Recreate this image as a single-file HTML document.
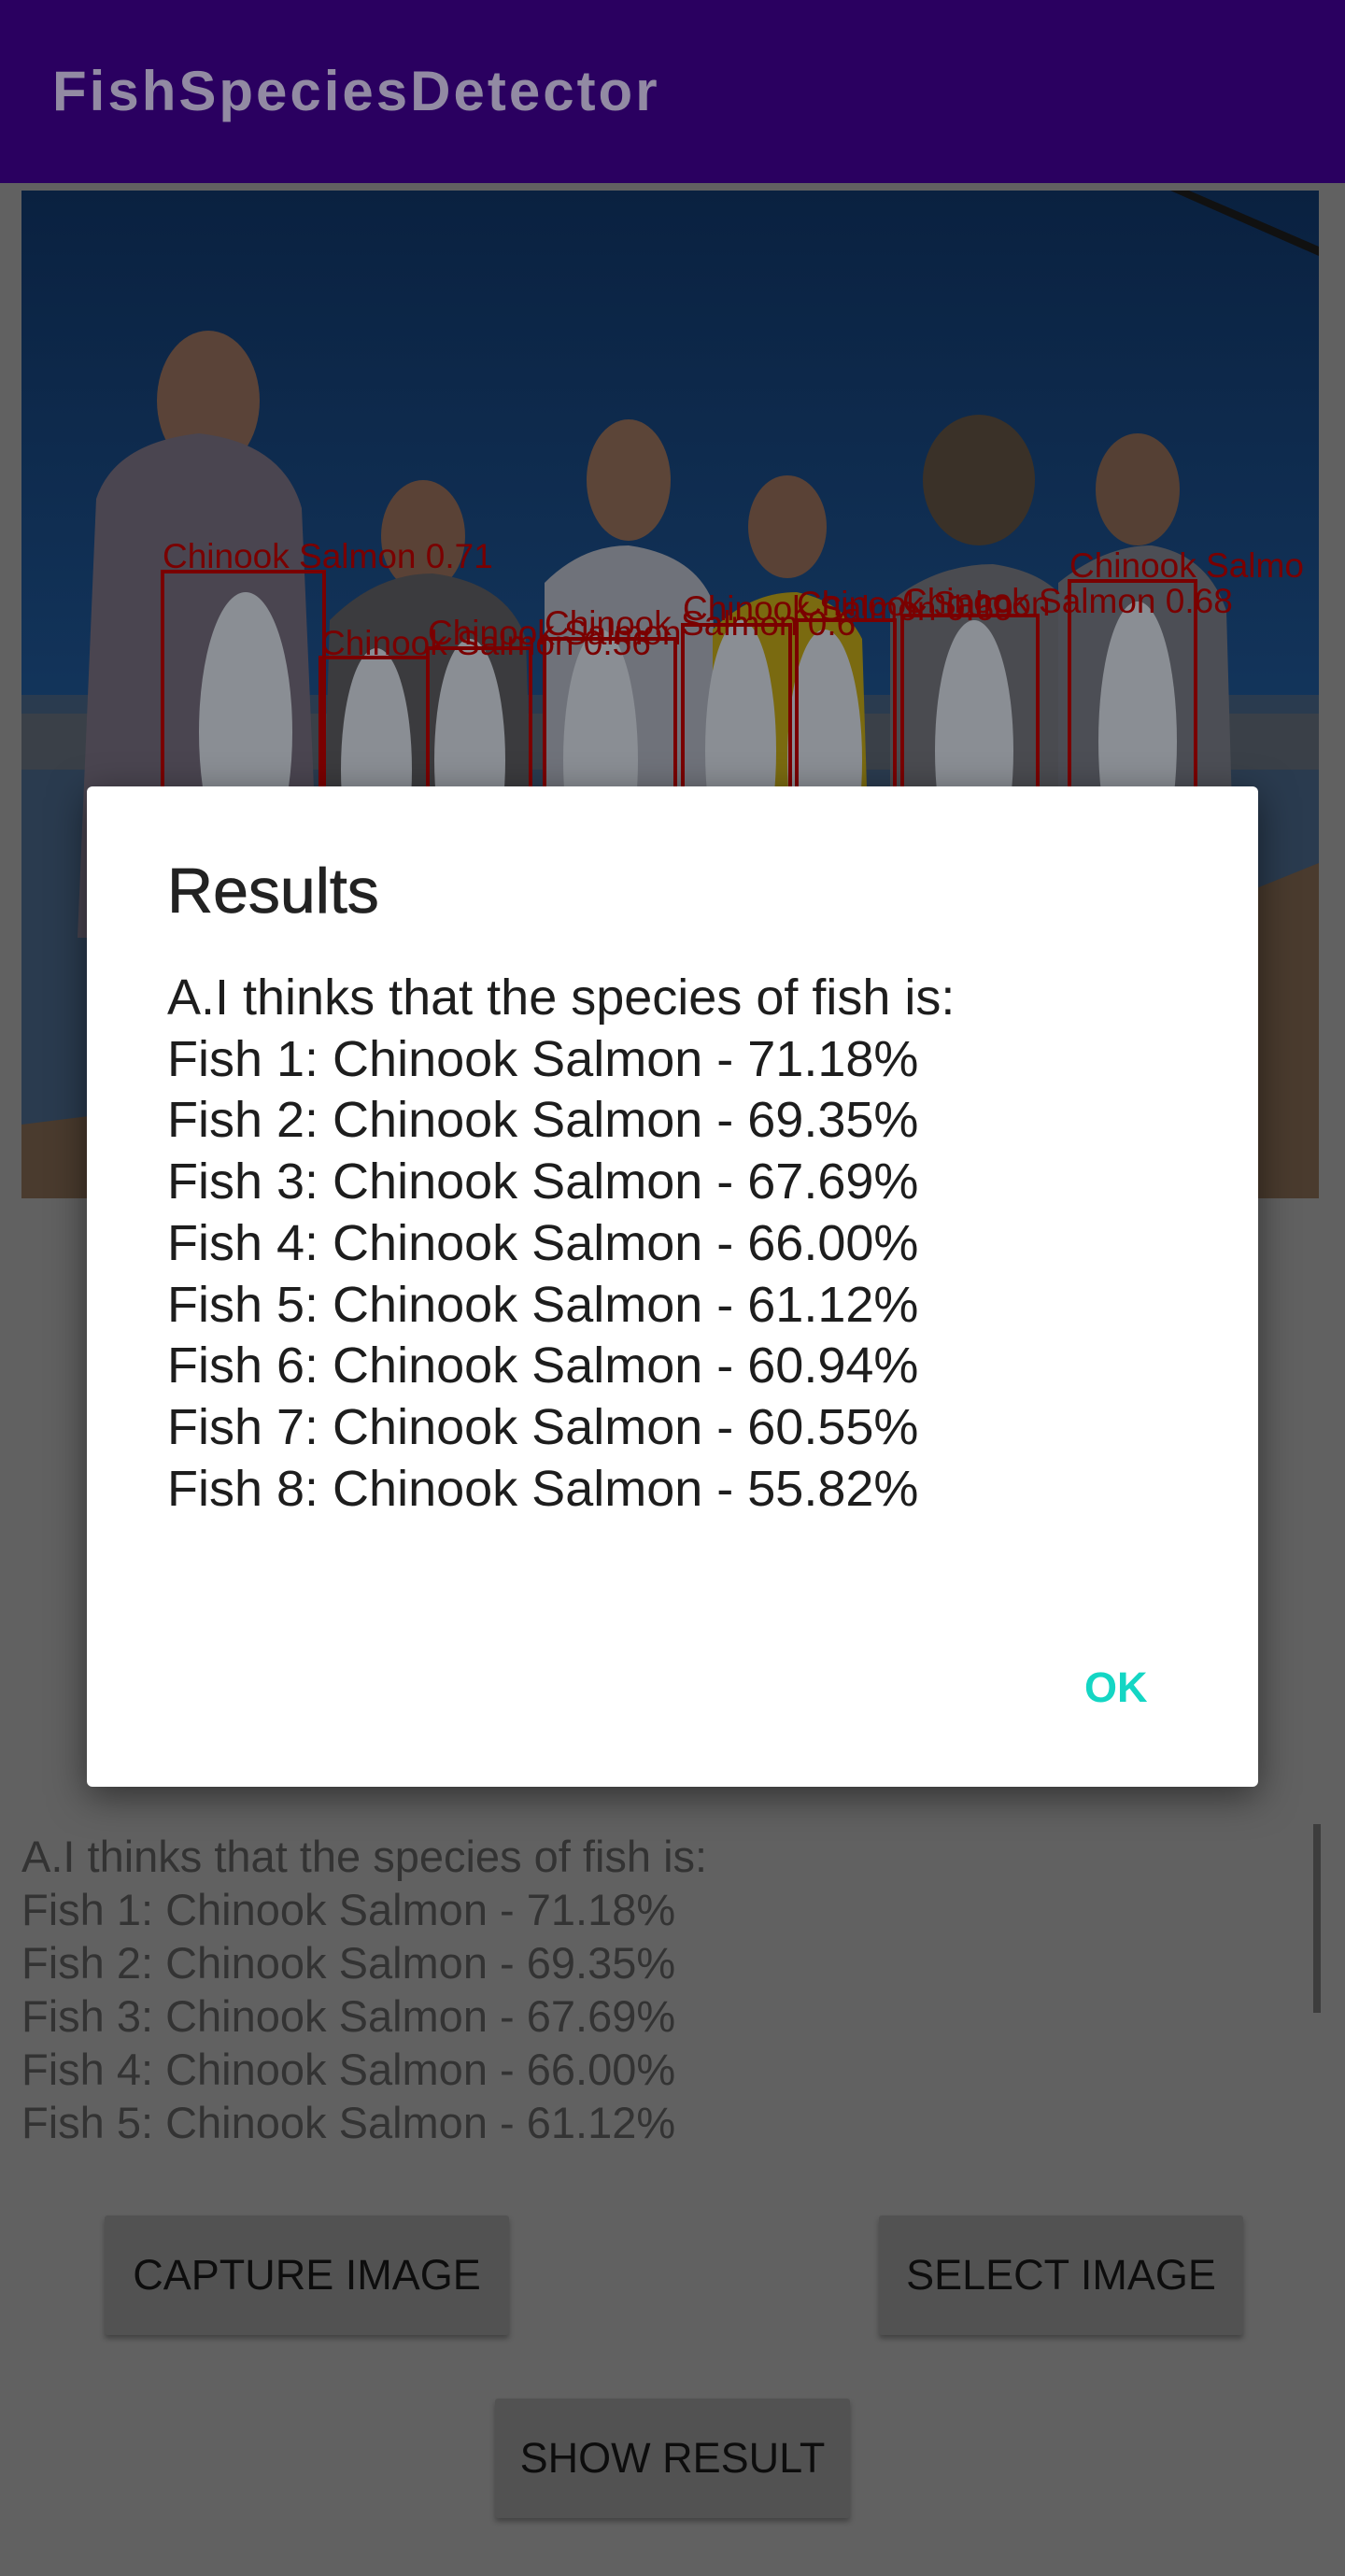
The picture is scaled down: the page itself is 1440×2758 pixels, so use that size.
<!DOCTYPE html>
<html><head><meta charset="utf-8"><style>
*{margin:0;padding:0;box-sizing:border-box}
body{width:1440px;height:2758px;background:#616161;position:relative;overflow:hidden;font-family:"Liberation Sans",Arial,sans-serif}
.bar{position:absolute;left:0;top:0;width:1440px;height:196px;background:#2a0060}
.bar span{position:absolute;left:56px;top:62px;font-size:60px;font-weight:bold;color:#928aa3;letter-spacing:3px;line-height:72px}
.photo{position:absolute;left:23px;top:204px;width:1389px;height:1079px}
.dlg{position:absolute;left:93px;top:842px;width:1254px;height:1071px;background:#fff;border-radius:6px;box-shadow:0 10px 40px rgba(0,0,0,.5)}
.dlg h1{position:absolute;left:86px;top:72px;font-size:68px;font-weight:normal;color:#222;line-height:80px;-webkit-text-stroke:0.8px #222}
.dlg .body{position:absolute;left:86px;top:194px;font-size:54px;line-height:65.7px;color:#1d1d1d}
.dlg .ok{position:absolute;left:1068px;top:940px;font-size:45px;font-weight:bold;color:#14d6c4;line-height:50px}
.txt{position:absolute;left:23px;top:1959px;font-size:47px;line-height:57px;color:#333}
.sb{position:absolute;left:1406px;top:1953px;width:8px;height:202px;background:#3d3d3d}
.btn{position:absolute;background:#525252;box-shadow:0 4px 6px rgba(0,0,0,.3);border-radius:3px;color:#0d0d0d;font-size:45px;display:flex;align-items:center;justify-content:center}
</style></head><body>
<div class="bar"><span>FishSpeciesDetector</span></div>
<svg class="photo" viewBox="0 0 1389 1079" xmlns="http://www.w3.org/2000/svg">
<defs><linearGradient id="sky" x1="0" y1="0" x2="0" y2="1"><stop offset="0" stop-color="#0a2140"/><stop offset="0.6" stop-color="#143860"/><stop offset="1" stop-color="#1b3f63"/></linearGradient></defs>
<rect width="1389" height="1079" fill="url(#sky)"/>
<path d="M1230 0 L1389 70 L1389 60 L1250 0Z" fill="#111"/>
<rect x="0" y="540" width="1389" height="539" fill="#2a3b4f"/>
<rect x="0" y="560" width="1389" height="60" fill="#3a4048"/>
<path d="M1389 720 L1290 760 L1240 1079 L1389 1079Z" fill="#4a3b2e"/>
<path d="M0 1000 L80 990 L70 1079 L0 1079Z" fill="#4a3b2e"/>
<!-- people -->
<ellipse cx="200" cy="225" rx="55" ry="75" fill="#5a4338"/>
<path d="M80 330 Q100 270 190 260 Q280 270 300 340 L320 800 L60 800Z" fill="#4a4550"/>
<ellipse cx="430" cy="370" rx="45" ry="60" fill="#5a4236"/>
<path d="M330 460 Q380 410 440 410 Q520 420 540 480 L550 800 L320 800Z" fill="#3b3b3e"/>
<ellipse cx="650" cy="310" rx="45" ry="65" fill="#5c4538"/>
<path d="M560 420 Q600 380 650 380 Q720 390 740 440 L750 800 L560 800Z" fill="#6f727a"/>
<ellipse cx="820" cy="360" rx="42" ry="55" fill="#5a4236"/>
<path d="M740 470 Q780 430 830 430 Q880 440 900 480 L910 800 L740 800Z" fill="#7a6a10"/>
<ellipse cx="1025" cy="310" rx="60" ry="70" fill="#3a3128"/>
<path d="M930 440 Q980 400 1040 400 Q1110 410 1130 460 L1140 800 L930 800Z" fill="#4a4b50"/>
<ellipse cx="1195" cy="320" rx="45" ry="60" fill="#554034"/>
<path d="M1110 420 Q1160 380 1210 380 Q1270 390 1290 450 L1300 800 L1110 800Z" fill="#4c4e55"/>
<!-- fish -->
<g fill="#8a8e94"><ellipse cx="240" cy="580" rx="50" ry="150"/><ellipse cx="380" cy="620" rx="38" ry="130"/><ellipse cx="480" cy="610" rx="38" ry="130"/><ellipse cx="620" cy="610" rx="40" ry="140"/><ellipse cx="770" cy="600" rx="38" ry="140"/><ellipse cx="860" cy="610" rx="40" ry="140"/><ellipse cx="1020" cy="600" rx="42" ry="140"/><ellipse cx="1195" cy="590" rx="42" ry="150"/></g>
<g fill="none" stroke="#7a0000" stroke-width="4">
<rect x="151" y="408" width="173" height="700"/><rect x="320" y="500" width="115" height="600"/><rect x="435" y="490" width="110" height="600"/><rect x="560" y="480" width="140" height="600"/><rect x="708" y="465" width="115" height="600"/><rect x="830" y="460" width="105" height="600"/><rect x="943" y="455" width="145" height="600"/><rect x="1122" y="418" width="135" height="700"/></g>
<g fill="#7a0000" font-family="Liberation Sans,Arial,sans-serif" font-size="37">
<text x="151" y="404">Chinook Salmon 0.71</text>
<text x="320" y="497">Chinook Salmon 0.56</text>
<text x="435" y="486">Chinook Salmon</text>
<text x="560" y="476">Chinook Salmon 0.6</text>
<text x="708" y="460">Chinook Salmon 0.69</text>
<text x="830" y="455">Chinook Salmon</text>
<text x="943" y="452">Chinook Salmon 0.68</text>
<text x="1122" y="414">Chinook Salmo</text></g>
</svg>
<div class="dlg">
<h1>Results</h1>
<div class="body">A.I thinks that the species of fish is:<br>Fish 1: Chinook Salmon - 71.18%<br>Fish 2: Chinook Salmon - 69.35%<br>Fish 3: Chinook Salmon - 67.69%<br>Fish 4: Chinook Salmon - 66.00%<br>Fish 5: Chinook Salmon - 61.12%<br>Fish 6: Chinook Salmon - 60.94%<br>Fish 7: Chinook Salmon - 60.55%<br>Fish 8: Chinook Salmon - 55.82%</div>
<div class="ok">OK</div>
</div>
<div class="txt">A.I thinks that the species of fish is:<br>Fish 1: Chinook Salmon - 71.18%<br>Fish 2: Chinook Salmon - 69.35%<br>Fish 3: Chinook Salmon - 67.69%<br>Fish 4: Chinook Salmon - 66.00%<br>Fish 5: Chinook Salmon - 61.12%</div>
<div class="sb"></div>
<div class="btn" style="left:112px;top:2372px;width:433px;height:128px">CAPTURE IMAGE</div>
<div class="btn" style="left:941px;top:2372px;width:390px;height:128px">SELECT IMAGE</div>
<div class="btn" style="left:530px;top:2568px;width:380px;height:128px">SHOW RESULT</div>
</body></html>
